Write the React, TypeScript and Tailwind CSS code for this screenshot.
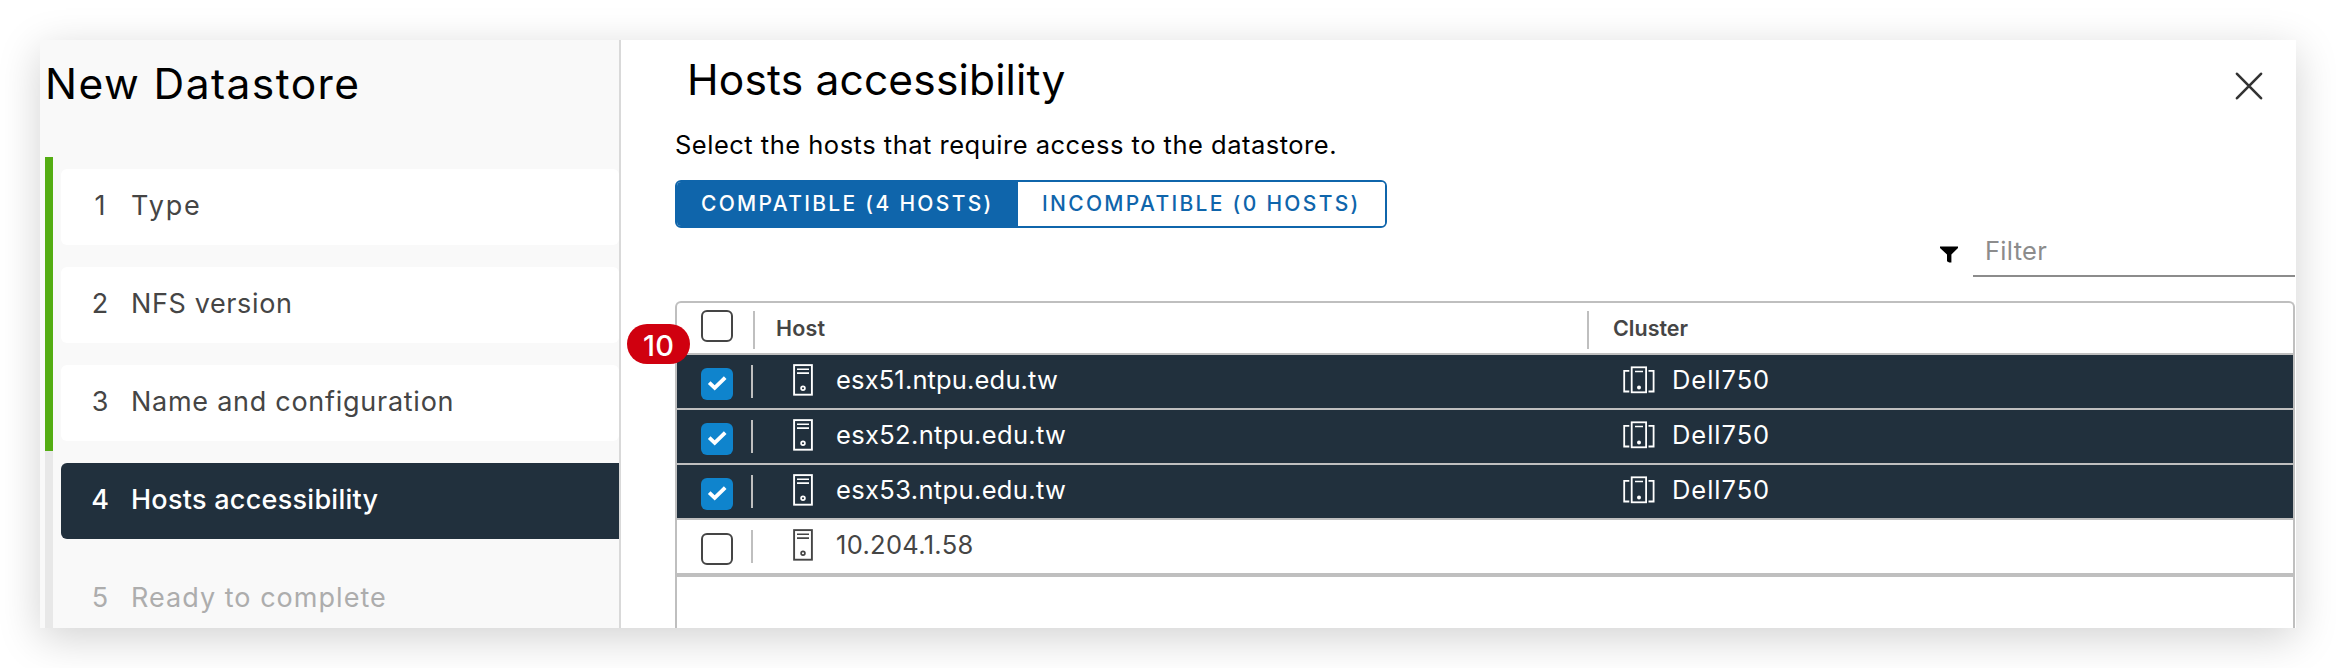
type Step = { n: number; label: string; state: "done" | "active" | "pending"; spacing: string };
type Host = { name: string; cluster?: string; selected: boolean; spacing: string };

const steps: Step[] = [
  { n: 1, label: "Type", state: "done", spacing: "tracking-[0.07em]" },
  { n: 2, label: "NFS version", state: "done", spacing: "tracking-[0.023em]" },
  { n: 3, label: "Name and configuration", state: "done", spacing: "tracking-[0.027em]" },
  { n: 4, label: "Hosts accessibility", state: "active", spacing: "tracking-[0.01em]" },
  { n: 5, label: "Ready to complete", state: "pending", spacing: "tracking-[0.038em]" },
];

const stepStyles = {
  done: "rounded-md bg-white text-[#454545]",
  active: "rounded-l-md bg-[#21303d] text-white font-medium",
  pending: "text-[#adadad]",
};

const hosts: Host[] = [
  { name: "esx51.ntpu.edu.tw", cluster: "Dell750", selected: true, spacing: "tracking-[0.006em]" },
  { name: "esx52.ntpu.edu.tw", cluster: "Dell750", selected: true, spacing: "tracking-[0.013em]" },
  { name: "esx53.ntpu.edu.tw", cluster: "Dell750", selected: true, spacing: "tracking-[0.014em]" },
  { name: "10.204.1.58", selected: false, spacing: "tracking-[0.012em]" },
];

function HostIcon() {
  return (
    <svg className="mt-[9px] ml-10 h-8 w-5 shrink-0" viewBox="0 0 20 32" fill="none" stroke="currentColor">
      <rect x="1.1" y="1.1" width="17.8" height="29.6" strokeWidth="1.9" />
      <path d="M4 5.3h12M4 9.1h12" strokeWidth="1.6" />
      <circle cx="10" cy="24.3" r="1.9" strokeWidth="1.7" />
    </svg>
  );
}

function ClusterIcon() {
  return (
    <svg className="mt-[11px] h-7 w-8 shrink-0" viewBox="0 0 32 28" fill="none" stroke="currentColor" strokeWidth="1.8">
      <rect x="8.7" y="1.3" width="14.4" height="25" />
      <path d="M12 5.5h8" strokeWidth="1.5" />
      <circle cx="16" cy="21.6" r="2" fill="currentColor" stroke="none" />
      <path d="M6.3 4.9H1.2v20.6h5.1M25.5 4.9h5.1v20.6h-5.1" />
    </svg>
  );
}

function Checkbox({ checked, className }: { checked: boolean; className: string }) {
  return checked ? (
    <span className={`block size-8 shrink-0 rounded-md bg-[#0f84cd] ${className}`}>
      <svg className="size-8" viewBox="0 0 32 32" fill="none" stroke="white" strokeWidth="3.8">
        <path d="M8.2 14.6l5.5 5.2L24.2 9.6" />
      </svg>
    </span>
  ) : (
    <span className={`block size-8 shrink-0 rounded-md border-2 border-[#454545] bg-white ${className}`} />
  );
}

function Sidebar() {
  return (
    <aside className="flex w-[581px] shrink-0 flex-col border-r-2 border-[#d9d9d9] bg-[#f9f9f9]">
      <h1 className="h-[117px] shrink-0 pt-5 pl-[5px] text-[42.5px] leading-[48px] tracking-[0.034em] text-black">
        New Datastore
      </h1>
      <div className="flex min-h-0 grow pl-[5px]">
        <div className="flex w-2 shrink-0 flex-col bg-[#e8e8e8]">
          <div className="h-[294px] bg-[#54ad13]" />
        </div>
        <ol className="flex grow flex-col gap-[22px] pt-3 pl-2">
          {steps.map((s) => (
            <li
              key={s.n}
              className={`flex h-[76px] shrink-0 items-center pb-[2px] pl-[23px] text-[27px] leading-8 ${stepStyles[s.state]}`}
            >
              <span className="w-8 text-center">{s.n}</span>
              <span className={`ml-[15px] whitespace-nowrap ${s.spacing}`}>{s.label}</span>
            </li>
          ))}
        </ol>
      </div>
    </aside>
  );
}

function HostTable() {
  return (
    <div className="mt-6 flex grow flex-col rounded-t-md border-2 border-b-0 border-[#bfbfbf]">
      <div className="flex h-[52px] shrink-0 border-b-2 border-[#bfbfbf] text-[21.5px] leading-7 font-semibold text-[#454545]">
        <div className="flex w-[910px] pl-6">
          <Checkbox checked={false} className="mt-[7px]" />
          <span className="mt-2 ml-5 h-[38px] w-[2px] bg-[#bfbfbf]" />
          <span className="mt-[11px] ml-[21px] tracking-[0.01em]">Host</span>
        </div>
        <div className="flex">
          <span className="mt-2 h-[38px] w-[2px] bg-[#bfbfbf]" />
          <span className="mt-[11px] ml-6">Cluster</span>
        </div>
      </div>
      {hosts.map((h) => (
        <div
          key={h.name}
          className={`flex h-[55px] shrink-0 border-b-2 border-[#bfbfbf] text-[25.5px] leading-8 ${
            h.selected ? "bg-[#21303d] text-white" : "bg-white text-[#454545]"
          }`}
        >
          <div className="flex w-[910px] shrink-0 pl-6">
            <Checkbox checked={h.selected} className="mt-[12.5px]" />
            <span className="mt-[10px] ml-[18px] h-[33px] w-[2px] bg-[#bfbfbf]" />
            <HostIcon />
            <span className={`mt-[9px] ml-[23px] ${h.spacing}`}>{h.name}</span>
          </div>
          {h.cluster && (
            <div className="flex pl-9">
              <ClusterIcon />
              <span className="mt-[9px] ml-[17px] tracking-[0.038em]">{h.cluster}</span>
            </div>
          )}
        </div>
      ))}
      <div className="h-[2px] shrink-0 bg-[#bfbfbf]" />
    </div>
  );
}

export default function App() {
  return (
    <div className="h-[668px] w-[2336px] overflow-hidden bg-white p-10 font-['Inter',sans-serif]">
      <div className="relative h-[588px] w-[2256px] shadow-[0_10px_40px_rgba(0,0,0,0.18)]">
        <div className="flex h-full overflow-hidden bg-white">
          <Sidebar />
          <main className="flex min-w-0 grow flex-col pr-px pl-[54px]">
            <div className="flex justify-between">
              <h2 className="pt-4 pl-3 text-[42.5px] leading-[48px] tracking-[0.004em] text-black">
                Hosts accessibility
              </h2>
              <svg className="mt-8 mr-[32px] size-7" viewBox="0 0 28 28" stroke="#333333" strokeWidth="2.6" strokeLinecap="round">
                <path d="M2 1.8l24 24.4M26 1.8L2 26.2" />
              </svg>
            </div>
            <p className="mt-[25px] text-[25.5px] leading-8 tracking-[0.0195em] text-black">
              Select the hosts that require access to the datastore.
            </p>
            <div className="mt-[19px] flex h-12 w-[712px] shrink-0 overflow-hidden rounded-md border-2 border-[#0f65ab] text-[21px] leading-[44px] font-medium tracking-[0.11em] whitespace-nowrap">
              <button className="w-[341px] bg-[#0f65ab] pl-6 text-left text-white">COMPATIBLE (4 HOSTS)</button>
              <button className="grow bg-white pl-6 text-left text-[#0f65ab]">INCOMPATIBLE (0 HOSTS)</button>
            </div>
            <div className="flex h-[49px] shrink-0 justify-end">
              <svg className="mt-[18px] mr-[15px] h-[17px] w-[18px]" viewBox="0 0 18 17" fill="black">
                <path d="M0 .6h18v1.5L11.4 8.6v8H9.2L7 15.3V8.6L0 2.1z" />
              </svg>
              <div className="w-[322px] border-b-2 border-[#8c8c8c] pt-[7px] pl-3 text-[25.5px] leading-8 tracking-[0.012em] text-[#8c8c8c]">
                Filter
              </div>
            </div>
            <HostTable />
          </main>
        </div>
        <span className="absolute top-[284px] left-[587px] h-10 w-[63px] rounded-full bg-[#d0000f] text-center text-[29px] leading-[43px] font-medium text-white">
          10
        </span>
      </div>
    </div>
  );
}
